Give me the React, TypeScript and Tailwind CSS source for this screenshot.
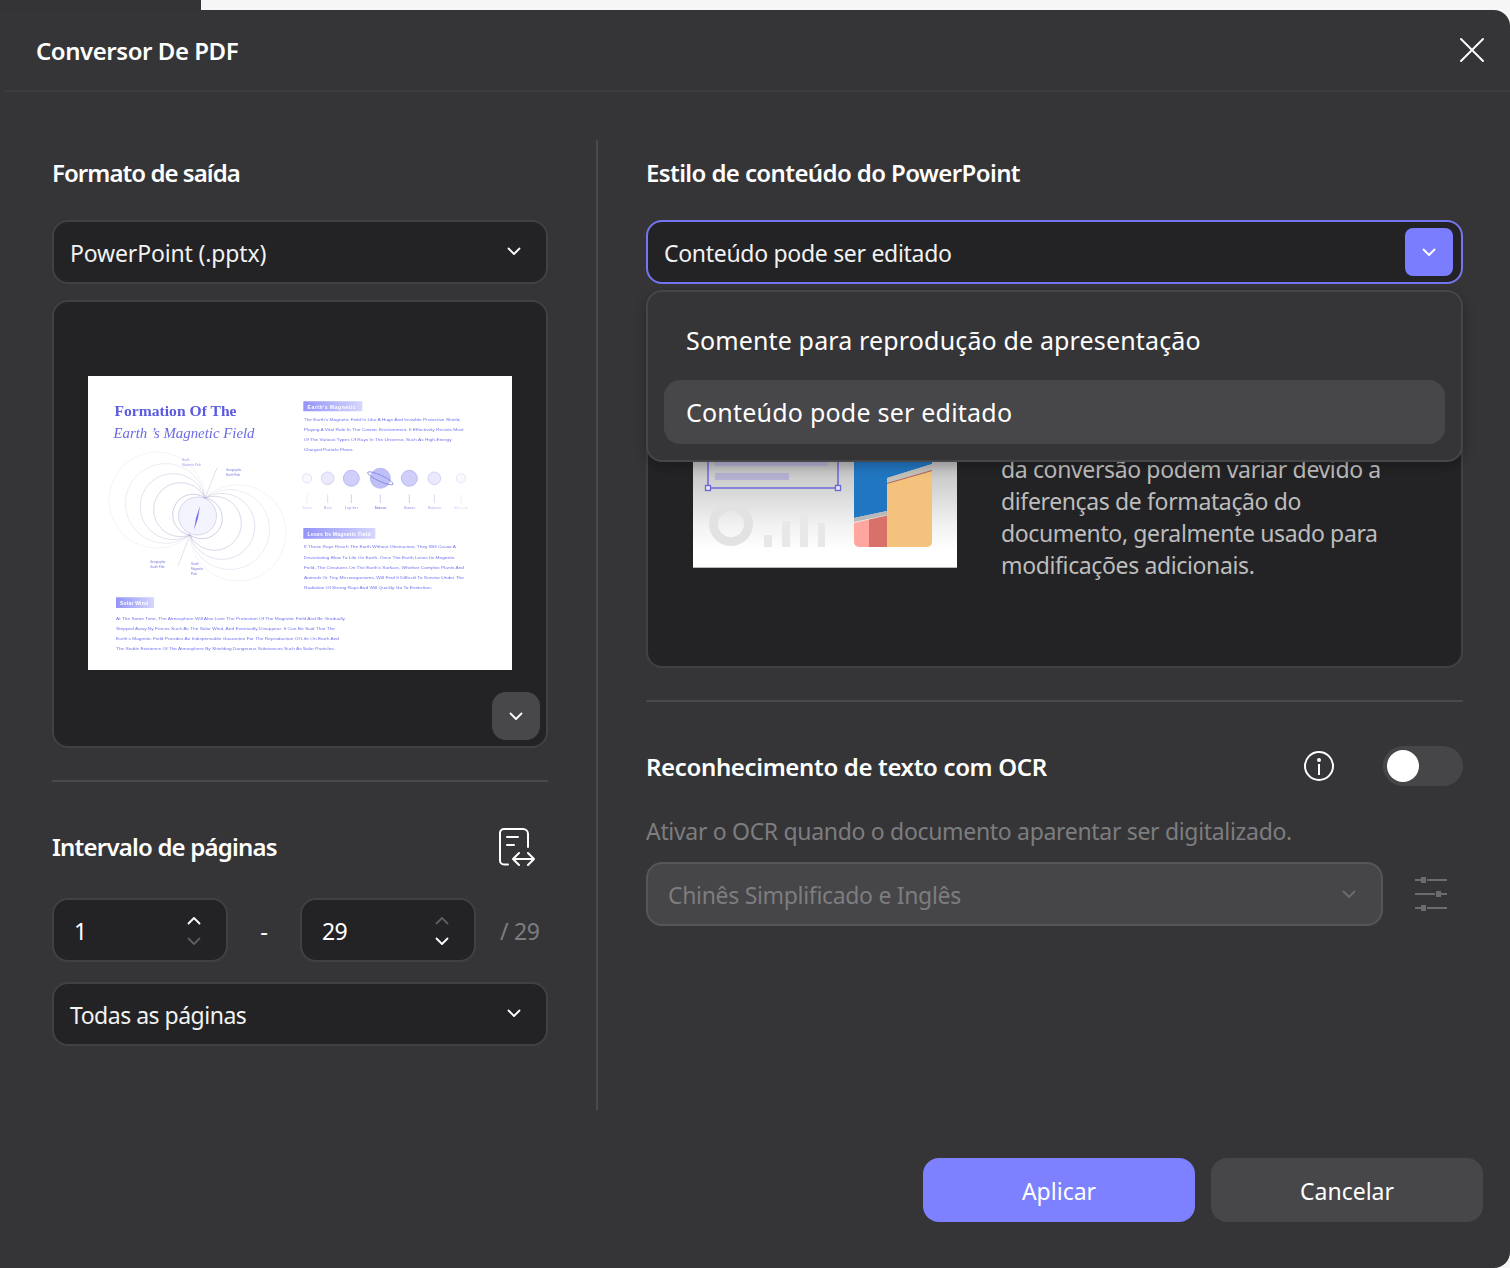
import React from "react";

const Chevron = ({ className = "", color = "#ffffff", size = 16 }: { className?: string; color?: string; size?: number }) => (
  <svg width={size} height={size} viewBox="0 0 16 16" fill="none" className={className}>
    <path d="M2.5 5.5 L8 11 L13.5 5.5" stroke={color} strokeWidth="1.8" strokeLinecap="round" strokeLinejoin="round" />
  </svg>
);
const ChevronUp = ({ color = "#ffffff" }: { color?: string }) => (
  <svg width={16} height={16} viewBox="0 0 16 16" fill="none">
    <path d="M2.5 10.5 L8 5 L13.5 10.5" stroke={color} strokeWidth="1.8" strokeLinecap="round" strokeLinejoin="round" />
  </svg>
);

const Stepper = ({ value, upOn }: { value: string; upOn: boolean }) => (
  <div className="w-[176px] h-[64px] rounded-[16px] bg-[#232325] border-2 border-[#414143] flex items-center justify-between pl-[20px] pr-[24px]">
    <span className="text-[23px] text-white pt-[3px] tracking-[-0.6px]">{value}</span>
    <div className="flex flex-col gap-[4px] pt-[2px]">
      <ChevronUp color={upOn ? "#ffffff" : "#5e5e60"} />
      <Chevron color={upOn ? "#5e5e60" : "#ffffff"} />
    </div>
  </div>
);

const Select = ({ label, w, tracking }: { label: string; w: string; tracking: string }) => (
  <div className={`${w} h-[64px] rounded-[16px] bg-[#232325] border-2 border-[#414143] flex items-center justify-between pl-[16px] pr-[24px]`}>
    <span className={`text-[23px] pt-[3px] text-[#f2f2f2] ${tracking}`}>{label}</span>
    <Chevron className="mt-[-2px]" />
  </div>
);

const lines = ({ x, ys, rows, o = 1 }: { x: number; ys: number[]; rows: [string, number][]; o?: number }) =>
  rows.map(([t, w], i) => (
    <text key={t} x={x} y={ys[i]} fontSize="4" fontFamily="'Liberation Sans', sans-serif" fill="#7474f2" opacity={o} textLength={w} lengthAdjust="spacingAndGlyphs">
      {t}
    </text>
  ));

const SlidePreview = () => {
  const radii = [20.5, 27, 33, 40, 48];
  const N = { x: 117, y: 122 };
  const S = { x: 102, y: 159 };
  const ops = [0.8, 0.65, 0.5, 0.32, 0.2];
  const planets: [number, number, string, string, number][] = [
    [681, 14, "Venus", "#f0f0fc", 0.45],
    [743, 19, "Mars", "#e2e2fb", 0.7],
    [814, 24, "Jupiter", "#cfcffa", 1],
    [901, 30, "Saturn", "#c0c0f8", 1],
    [988, 24, "Uranus", "#cfcffa", 1],
    [1063, 19, "Neptune", "#e2e2fb", 0.7],
    [1143, 14, "Mercury", "#f0f0fc", 0.4],
  ];
  return (
    <svg width={424} height={294} viewBox="0 0 424 294" className="bg-white blur-[0.45px] mb-[2px]">
      <defs>
        <linearGradient id="badge" x1="0" x2="1" y1="0" y2="0">
          <stop offset="0" stopColor="#9494f8" />
          <stop offset="1" stopColor="#d6d6fc" />
        </linearGradient>
      </defs>
      <text x="26.5" y="40" fontSize="15" fontWeight="700" fontFamily="'Liberation Serif', serif" fill="#5a5ae0" textLength="122" lengthAdjust="spacingAndGlyphs">Formation Of The</text>
      <text x="25.5" y="62" fontSize="15" fontStyle="italic" fontFamily="'Liberation Serif', serif" fill="#6a6ae6" textLength="141" lengthAdjust="spacingAndGlyphs">Earth ’s Magnetic Field</text>

      {radii.map((r, i) => (
        <path key={`r${i}`} d={`M${N.x} ${N.y} A${r} ${r} 0 1 1 ${S.x} ${S.y}`} fill="none" stroke="#8a8ac0" strokeWidth="0.5" opacity={ops[i]} />
      ))}
      {radii.map((r, i) => (
        <path key={`l${i}`} d={`M${N.x} ${N.y} A${r} ${r} 0 1 0 ${S.x} ${S.y}`} fill="none" stroke="#8a8ac0" strokeWidth="0.5" opacity={ops[i]} />
      ))}
      <circle cx="109.5" cy="140" r="19" fill="#f4f4fe" stroke="#b4b4dc" strokeWidth="0.5" />
      <polygon points="112,130 110,142 106,154 108,142" fill="#6e6ee8" />
      <path d="M117 122 L129 92 M102 159 L90 190" stroke="#9a9ac8" strokeWidth="0.5" strokeDasharray="1.5 1" />
      <text x="94" y="85" fontSize="3" fill="#a0a0f0" fontFamily="'Liberation Sans', sans-serif">North</text>
      <text x="94" y="90" fontSize="3" fill="#a0a0f0" fontFamily="'Liberation Sans', sans-serif">Magnetic Pole</text>
      <text x="138" y="95" fontSize="3" fill="#7a7ae0" fontFamily="'Liberation Sans', sans-serif">Geographic</text>
      <text x="138" y="100" fontSize="3" fill="#7a7ae0" fontFamily="'Liberation Sans', sans-serif">North Pole</text>
      <text x="62" y="187" fontSize="3" fill="#7a7ae0" fontFamily="'Liberation Sans', sans-serif">Geographic</text>
      <text x="62" y="192" fontSize="3" fill="#7a7ae0" fontFamily="'Liberation Sans', sans-serif">South Pole</text>
      <text x="103" y="189" fontSize="3" fill="#7a7ae0" fontFamily="'Liberation Sans', sans-serif">South</text>
      <text x="103" y="194" fontSize="3" fill="#7a7ae0" fontFamily="'Liberation Sans', sans-serif">Magnetic</text>
      <text x="103" y="199" fontSize="3" fill="#7a7ae0" fontFamily="'Liberation Sans', sans-serif">Pole</text>

      <rect x="215.3" y="25.3" width="59" height="10" rx="0.5" fill="url(#badge)" />
      <text x="219.5" y="32.8" fontSize="5" fontWeight="700" fill="#ffffff" fontFamily="'Liberation Sans', sans-serif" textLength="48">Earth's Magnetic</text>
      {lines({
        x: 215.7,
        ys: [45, 55, 65, 75],
        rows: [
          ["The Earth's Magnetic Field Is Like A Huge And Invisible Protective Shield,", 157],
          ["Playing A Vital Role In The Cosmic Environment. It Effectively Resists Most", 160],
          ["Of The Various Types Of Rays In The Universe, Such As High-Energy", 148],
          ["Charged Particle Flows.", 50],
        ],
      })}

      {planets.map(([zx, zr, name, fill, op]) => {
        const cx = zx / 3 - 8;
        const lw = name.length * 1.9;
        return (
          <g key={name} opacity={op}>
            <circle cx={cx} cy="102.3" r={zr / 3} fill={fill} stroke="#8f8fe6" strokeWidth="0.5" />
            {name === "Saturn" && <ellipse cx={cx} cy="102.3" rx="14" ry="3" fill="none" stroke="#7a7ae0" strokeWidth="0.7" transform={`rotate(25 ${cx} 102.3)`} />}
            <line x1={cx} x2={cx} y1="118.5" y2="127" stroke="#a0a0e8" strokeWidth="0.5" />
            <text x={cx - lw / 2} y="133" fontSize="3" fill="#7a7ae0" fontWeight={name === "Saturn" ? 700 : 400} fontFamily="'Liberation Sans', sans-serif" textLength={lw}>{name}</text>
          </g>
        );
      })}

      <rect x="215.3" y="152" width="72" height="10.7" rx="0.5" fill="url(#badge)" />
      <text x="219.5" y="159.8" fontSize="5" fontWeight="700" fill="#ffffff" fontFamily="'Liberation Sans', sans-serif" textLength="63">Loses Its Magnetic Field</text>
      {lines({
        x: 216,
        ys: [172.3, 182.7, 192.7, 202.7, 212.7],
        rows: [
          ["If These Rays Reach The Earth Without Obstruction, They Will Cause A", 152],
          ["Devastating Blow To Life On Earth. Once The Earth Loses Its Magnetic", 151],
          ["Field, The Creatures On The Earth's Surface, Whether Complex Plants And", 160],
          ["Animals Or Tiny Microorganisms, Will Find It Difficult To Survive Under The", 160],
          ["Radiation Of Strong Rays And Will Quickly Go To Extinction.", 128],
        ],
      })}

      <rect x="28" y="221.3" width="38" height="10.7" rx="0.5" fill="url(#badge)" />
      <text x="32" y="229" fontSize="5" fontWeight="700" fill="#ffffff" fontFamily="'Liberation Sans', sans-serif" textLength="28">Solar Wind</text>
      {lines({
        x: 28,
        ys: [244, 254.3, 264.3, 274.3],
        rows: [
          ["At The Same Time, The Atmosphere Will Also Lose The Protection Of The Magnetic Field And Be Gradually", 229],
          ["Stripped Away By Forces Such As The Solar Wind, And Eventually Disappear. It Can Be Said That The", 219],
          ["Earth's Magnetic Field Provides An Indispensable Guarantee For The Reproduction Of Life On Earth And", 223],
          ["The Stable Existence Of The Atmosphere By Shielding Dangerous Substances Such As Solar Particles.", 219],
        ],
      })}
    </svg>
  );
};

const EditableThumb = () => (
  <svg width={266} height={168} viewBox="0 0 266 168" className="shrink-0">
    <defs>
      <linearGradient id="card" x1="0" x2="0" y1="0" y2="1">
        <stop offset="0.35" stopColor="#bdbdbd" />
        <stop offset="0.75" stopColor="#f2f2f2" />
        <stop offset="0.9" stopColor="#ffffff" />
      </linearGradient>
    </defs>
    <rect x="1" y="0" width="264" height="167" fill="url(#card)" />
    <line x1="1" x2="265" y1="167.5" y2="167.5" stroke="#b8b8b8" />
    <rect x="23" y="60" width="113" height="6" fill="#b3b0d2" />
    <rect x="23" y="73" width="74" height="7" fill="#b3b0d2" />
    <path d="M16 40 V88 H146 V40" fill="none" stroke="#6a66d8" strokeWidth="1.5" />
    <rect x="13.5" y="85.5" width="5" height="5" fill="#e6e6f4" stroke="#6a66d8" strokeWidth="1.3" />
    <rect x="143.5" y="85.5" width="5" height="5" fill="#e6e6f4" stroke="#6a66d8" strokeWidth="1.3" />
    <circle cx="39" cy="124" r="17.5" fill="none" stroke="#e2e2e2" strokeWidth="9" />
    <rect x="72" y="135" width="8" height="12" fill="#e8e8e8" />
    <rect x="90" y="121" width="8" height="26" fill="#e8e8e8" />
    <rect x="108" y="113" width="8" height="34" fill="#e8e8e8" />
    <rect x="126" y="123" width="7" height="24" fill="#e8e8e8" />
    <polygon points="162,30 240,30 240,64 195,78 195,111 162,118" fill="#2176c2" />
    <polygon points="162,118 195,111 195,115 162,122" fill="#b8b8b8" />
    <polygon points="195,78 240,64 240,70 195,83" fill="#c4c0bc" />
    <path d="M195 84 L240 71 V142 a5 5 0 0 1 -5 5 H195 Z" fill="#f4c27c" />
    <line x1="195" y1="83.5" x2="240" y2="70.5" stroke="#a8442e" strokeWidth="0.8" />
    <path d="M162 123 L177 119.5 V147 H167 a5 5 0 0 1 -5 -5 Z" fill="#ffa79e" />
    <polygon points="177,119.5 195,115.5 195,147 177,147" fill="#d8716a" />
  </svg>
);

const PagesIcon = () => (
  <svg width={37} height={38} viewBox="0 0 37 38" fill="none" stroke="#ffffff" strokeWidth="2" strokeLinecap="round" strokeLinejoin="round">
    <path d="M9 36.5 H5 a4 4 0 0 1 -4 -4 V5 a4 4 0 0 1 4 -4 H24 a5 5 0 0 1 5 5 V19" />
    <path d="M8 9 H19 M8 17 H15" />
    <path d="M14 31 H35 M20 25 L14 31 L20 37 M29 25 L35 31 L29 37" />
  </svg>
);

const InfoIcon = () => (
  <svg width={30} height={30} viewBox="0 0 30 30" fill="none">
    <circle cx="15" cy="15" r="14" stroke="#ffffff" strokeWidth="2" />
    <circle cx="15" cy="9" r="2" fill="#ffffff" />
    <rect x="14" y="13" width="2" height="11" fill="#ffffff" />
  </svg>
);

const SlidersIcon = () => (
  <svg width={32} height={36} viewBox="0 0 32 36" fill="none">
    <g stroke="#6c6c6e" strokeWidth="2">
      <path d="M0 4 H6 M12 4 H32 M0 18 H20 M26 18 H32 M0 32 H6 M12 32 H32" />
    </g>
    <rect x="6" y="1" width="5" height="6" fill="#6c6c6e" />
    <rect x="21" y="15" width="5" height="6" fill="#6c6c6e" />
    <rect x="6" y="29" width="5" height="6" fill="#6c6c6e" />
  </svg>
);

const Heading = ({ children, tracking }: { children: React.ReactNode; tracking: string }) => (
  <h2 className={`text-[24px] leading-[32px] font-semibold text-white ${tracking}`}>{children}</h2>
);

export default function App() {
  return (
    <div className="w-[1510px] h-[1268px] bg-[#f6f6f6] flex flex-col overflow-hidden" style={{ fontFamily: "'Noto Sans', sans-serif" }}>
      <div className="h-[10px] w-[201px] bg-[#333335] shrink-0" />
      <div className="flex-1 bg-[#353537] rounded-tr-[16px] rounded-br-[16px] flex flex-col">
        <header className="ml-[5px] h-[82px] shrink-0 border-b-2 border-[#3c3c3e] flex items-center justify-between pl-[31px] pr-[26px]">
          <h1 className="text-[24px] font-semibold text-white tracking-[-0.45px] pt-[2px]">Conversor De PDF</h1>
          <svg width={24} height={24} viewBox="0 0 24 24" fill="none" stroke="#ffffff" strokeWidth="1.9" strokeLinecap="round">
            <path d="M1 1 L23 23 M23 1 L1 23" />
          </svg>
        </header>

        <main className="flex pl-[52px] pt-[48px] h-[970px] box-content pb-0 shrink-0">
          <section className="w-[496px] shrink-0 pt-[17px]">
            <Heading tracking="tracking-[-0.95px]">Formato de saída</Heading>
            <div className="mt-[31px]"><Select label="PowerPoint (.pptx)" w="w-[496px]" tracking="tracking-[-0.15px]" /></div>
            <div className="relative mt-[16px] h-[448px] rounded-[16px] bg-[#232325] border-2 border-[#414143] flex items-center justify-center">
              <SlidePreview />
              <div className="absolute right-[6px] bottom-[6px] w-[48px] h-[48px] rounded-[14px] bg-[#48484a] flex items-center justify-center">
                <Chevron />
              </div>
            </div>
            <div className="mt-[32px] h-[2px] bg-[#49494b]" />
            <div className="mt-[46px] flex items-center justify-between pr-[12px]">
              <Heading tracking="tracking-[-0.8px]">Intervalo de páginas</Heading>
              <PagesIcon />
            </div>
            <div className="mt-[32px] flex items-center">
              <Stepper value="1" upOn />
              <span className="w-[72px] text-center text-[24px] text-white pt-[2px]">-</span>
              <Stepper value="29" upOn={false} />
              <span className="ml-[24px] text-[23px] text-[#7d7d7f] whitespace-nowrap pt-[3px] tracking-[-0.3px]">/ 29</span>
            </div>
            <div className="mt-[20px]"><Select label="Todas as páginas" w="w-[496px]" tracking="tracking-[-0.5px]" /></div>
          </section>

          <div className="ml-[48px] w-[2px] bg-[#49494b] shrink-0" />

          <section className="ml-[48px] w-[817px] shrink-0 pt-[17px]">
            <Heading tracking="tracking-[-0.6px]">Estilo de conteúdo do PowerPoint</Heading>
            <div className="relative mt-[31px]">
              <div className="h-[64px] rounded-[16px] bg-[#232325] border-2 border-[#7476f0] flex items-center justify-between pl-[16px] pr-[8px]">
                <span className="text-[23px] pt-[3px] text-[#f2f2f2] tracking-[-0.3px]">Conteúdo pode ser editado</span>
                <div className="w-[48px] h-[48px] rounded-[8px] bg-[#7b7dff] flex items-center justify-center"><Chevron /></div>
              </div>
              <div className="absolute z-10 left-0 right-0 top-[70px] h-[172px] rounded-[16px] bg-[#353537] border-2 border-[#464648] shadow-[0_4px_12px_rgba(0,0,0,0.25)] px-[16px] pt-[25px]">
                <div className="h-[47px] flex items-center pl-[22px] text-[25px] tracking-[0.15px] text-white">Somente para reprodução de apresentação</div>
                <div className="mt-[16px] h-[64px] rounded-[16px] bg-[#474648] flex items-center pl-[22px] pt-[2px] text-[25px] tracking-[0.22px] text-white">Conteúdo pode ser editado</div>
              </div>
            </div>
            <div className="mt-[16px] h-[368px] rounded-[16px] bg-[#232325] border-2 border-[#414143] flex items-center pl-[44px]">
              <EditableThumb />
              <p className="ml-[43px] mt-[66px] text-[23px] leading-[32px] text-[#bdbdbd] whitespace-nowrap tracking-[-0.37px]">
                da conversão podem variar devido a<br />
                diferenças de formatação do<br />
                documento, geralmente usado para<br />
                modificações adicionais.
              </p>
            </div>
            <div className="mt-[32px] h-[2px] bg-[#49494b]" />
            <div className="mt-[44px] h-[40px] flex items-center">
              <div className="pt-[2px]"><Heading tracking="tracking-[-0.35px]">Reconhecimento de texto com OCR</Heading></div>
              <div className="ml-auto mr-[49px]"><InfoIcon /></div>
              <div className="w-[80px] h-[40px] rounded-full bg-[#464548] flex items-center pl-[4px]">
                <div className="w-[32px] h-[32px] rounded-full bg-white" />
              </div>
            </div>
            <p className="mt-[29px] text-[23px] leading-[32px] text-[#7d7d7f] tracking-[-0.32px]">Ativar o OCR quando o documento aparentar ser digitalizado.</p>
            <div className="mt-[15px] flex items-center">
              <div className="w-[737px] h-[64px] rounded-[16px] bg-[#464548] border-2 border-[#565658] flex items-center justify-between pl-[20px] pr-[24px]">
                <span className="text-[23px] pt-[3px] text-[#7d7d7f] tracking-[-0.32px]">Chinês Simplificado e Inglês</span>
                <Chevron color="#6c6c6e" />
              </div>
              <div className="ml-[32px]"><SlidersIcon /></div>
            </div>
          </section>
        </main>

        <footer className="mt-[48px] flex justify-end gap-[16px] pr-[27px]">
          <button className="w-[272px] h-[64px] rounded-[16px] bg-[#7d80ff] text-[23px] pt-[2px] text-white">Aplicar</button>
          <button className="w-[272px] h-[64px] rounded-[16px] bg-[#474648] text-[23px] pt-[2px] text-white">Cancelar</button>
        </footer>
      </div>
    </div>
  );
}
